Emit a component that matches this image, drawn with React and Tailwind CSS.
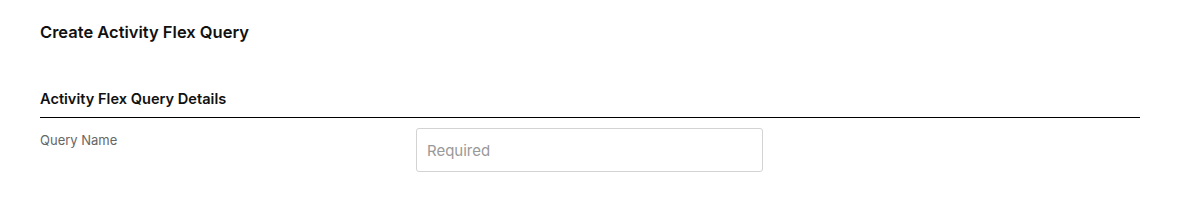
export default function App() {
  return (
    <div className="w-[1194px] h-[208px] bg-white pl-[40px] pr-[54px]" style={{ fontFamily: "Inter, 'Open Sans', sans-serif" }}>
      <h1 className="pt-[22px] text-[16.5px] leading-[20px] font-semibold text-[#111]">Create Activity Flex Query</h1>
      <div className="mt-[48px]">
        <h2 className="text-[14.6px] leading-[18px] font-semibold text-[#111] pb-[9px] border-b border-black">Activity Flex Query Details</h2>
        <div className="flex mt-[10px]">
          <label className="w-[376px] pt-[4px] text-[13px] leading-[16px] text-[#666]">Query Name</label>
          <input
            className="w-[347px] h-[44px] border border-[#d3d3d3] rounded-[3px] px-[10px] text-[15px] placeholder:text-[#999] outline-none"
            placeholder="Required"
          />
        </div>
      </div>
    </div>
  );
}
